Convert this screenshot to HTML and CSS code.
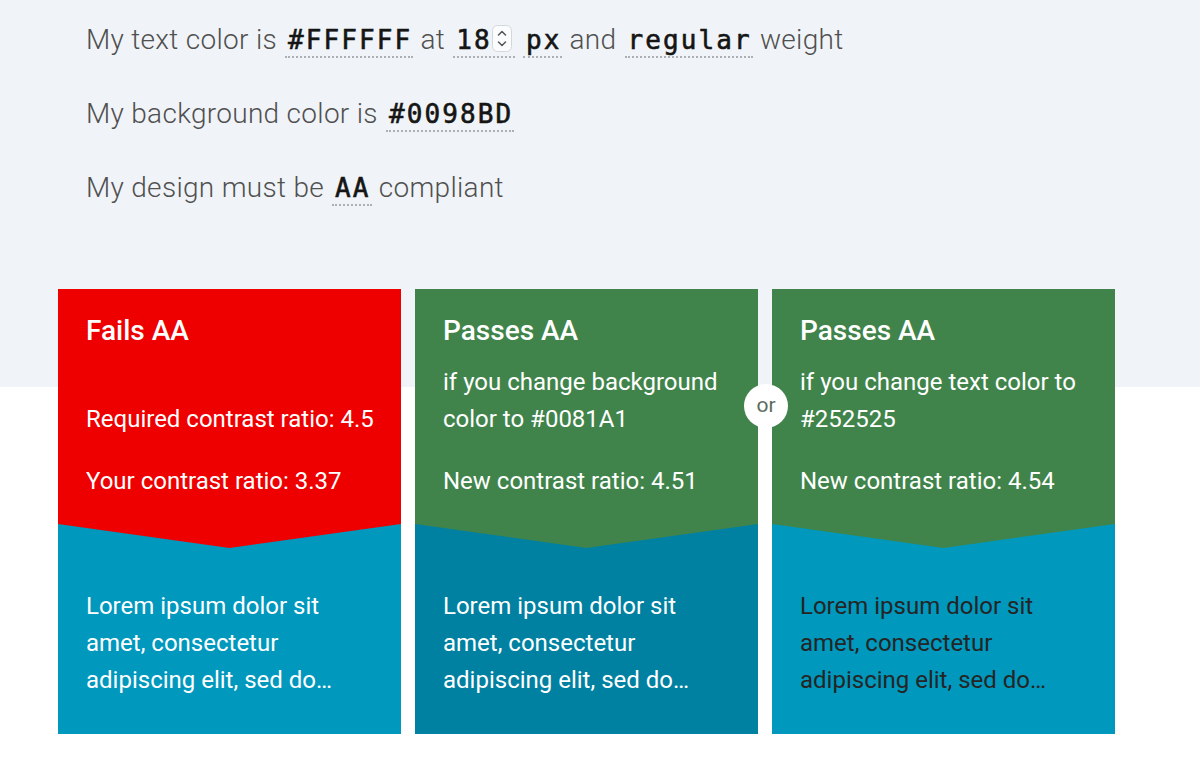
FILE: index.html
```html
<!DOCTYPE html>
<html lang="en">
<head>
<meta charset="utf-8">
<title>Contrast checker</title>
<link rel="stylesheet" href="styles.css">
</head>
<body>
<div class="page">
  <section class="settings">
    <div class="row">My text color is <span class="val">#FFFFFF</span> at <span class="val num">18<svg class="spin" width="20" height="27" viewBox="0 0 20 27"><rect x="0.5" y="0.5" width="19" height="26" rx="5" fill="#fbfcfd" stroke="#d3d6da"/><path d="M6.5 10 L10 6.5 L13.5 10" fill="none" stroke="#555" stroke-width="1.5" stroke-linecap="round" stroke-linejoin="round"/><path d="M6.5 17 L10 20.5 L13.5 17" fill="none" stroke="#555" stroke-width="1.5" stroke-linecap="round" stroke-linejoin="round"/></svg></span> <span class="val">px</span> and <span class="val">regular</span> weight</div>
    <div class="row">My background color is <span class="val">#0098BD</span></div>
    <div class="row">My design must be <span class="val">AA</span> compliant</div>
  </section>

  <section class="cards">
    <article class="card">
      <div class="head fail">
        <h2 class="title">Fails AA</h2>
        <div class="sub"><p>Required contrast ratio: 4.5</p></div>
        <p class="ratio">Your contrast ratio: 3.37</p>
      </div>
      <div class="body">Lorem ipsum dolor sit amet, consectetur adipiscing elit, sed do…</div>
    </article>

    <article class="card alt-bg">
      <div class="head pass">
        <h2 class="title">Passes AA</h2>
        <div class="sub"><p>if you change background color to #0081A1</p></div>
        <p class="ratio">New contrast ratio: 4.51</p>
      </div>
      <div class="body">Lorem ipsum dolor sit amet, consectetur adipiscing elit, sed do…</div>
    </article>

    <article class="card">
      <div class="head pass">
        <h2 class="title">Passes AA</h2>
        <div class="sub"><p>if you change text color to #252525</p></div>
        <p class="ratio">New contrast ratio: 4.54</p>
      </div>
      <div class="body dark">Lorem ipsum dolor sit amet, consectetur adipiscing elit, sed do…</div>
    </article>

    <div class="or">or</div>
  </section>
</div>
</body>
</html>
```

FILE: styles.css
```css
* { box-sizing: border-box; }

html, body {
  margin: 0;
  padding: 0;
}

body {
  font-family: Roboto, "Liberation Sans", Arial, sans-serif;
  background: linear-gradient(to bottom, #f0f4f8 0, #f0f4f8 387px, #ffffff 387px);
  min-height: 784px;
}

.page {
  width: 1200px;
}

.settings {
  padding: 3px 0 0 86px;
  color: #505050;
  font-size: 28px;
  font-weight: 300;
  letter-spacing: 0.3px;
}

.row {
  height: 74px;
  line-height: 74px;
  white-space: nowrap;
}

.val {
  display: inline-block;
  line-height: 32px;
  padding: 0 1px 0 3px;
  margin-left: 1px;
  border-bottom: 2px dotted #aab0b6;
  font-family: "DejaVu Sans Mono", "Liberation Mono", monospace;
  font-weight: normal;
  -webkit-text-stroke: 0.6px #151515;
  font-size: 26px;
  letter-spacing: 2.1px;
  color: #151515;
  vertical-align: baseline;
}

.num {
  padding-right: 3px;
}

.spin {
  vertical-align: -3px;
  margin-left: 0;
}

.cards {
  position: relative;
  margin: 64px 0 0 58px;
  width: 1058px;
  display: flex;
  gap: 14px;
}

.card {
  flex: 0 0 343px;
  height: 445px;
  background: #0098bd;
  display: flex;
  flex-direction: column;
}

.card.alt-bg {
  background: #0081a1;
}

.head {
  height: 259px;
  padding: 24px 20px 0 28px;
  color: #ffffff;
  clip-path: polygon(0 0, 100% 0, 100% calc(100% - 24px), 50% 100%, 0 calc(100% - 24px));
}

.head.fail { background: #ee0000; }
.head.pass { background: #40844b; }

.title {
  margin: 0;
  font-size: 28px;
  font-weight: 500;
  line-height: 36px;
}

.sub {
  margin-top: 15px;
  min-height: 74px;
  display: flex;
  flex-direction: column;
  justify-content: flex-end;
}

.sub p, .ratio {
  margin: 0;
  font-size: 24px;
  line-height: 37px;
}

.ratio {
  margin-top: 25px;
}

.body {
  margin-top: -24px;
  padding: 64px 20px 0 28px;
  font-size: 24px;
  line-height: 37px;
  color: #ffffff;
}

.body.dark {
  color: #252525;
}

.or {
  position: absolute;
  left: 686px;
  top: 95px;
  width: 44px;
  height: 44px;
  border-radius: 50%;
  background: #ffffff;
  color: #5b6b5e;
  font-size: 21px;
  line-height: 42px;
  text-align: center;
}
```
